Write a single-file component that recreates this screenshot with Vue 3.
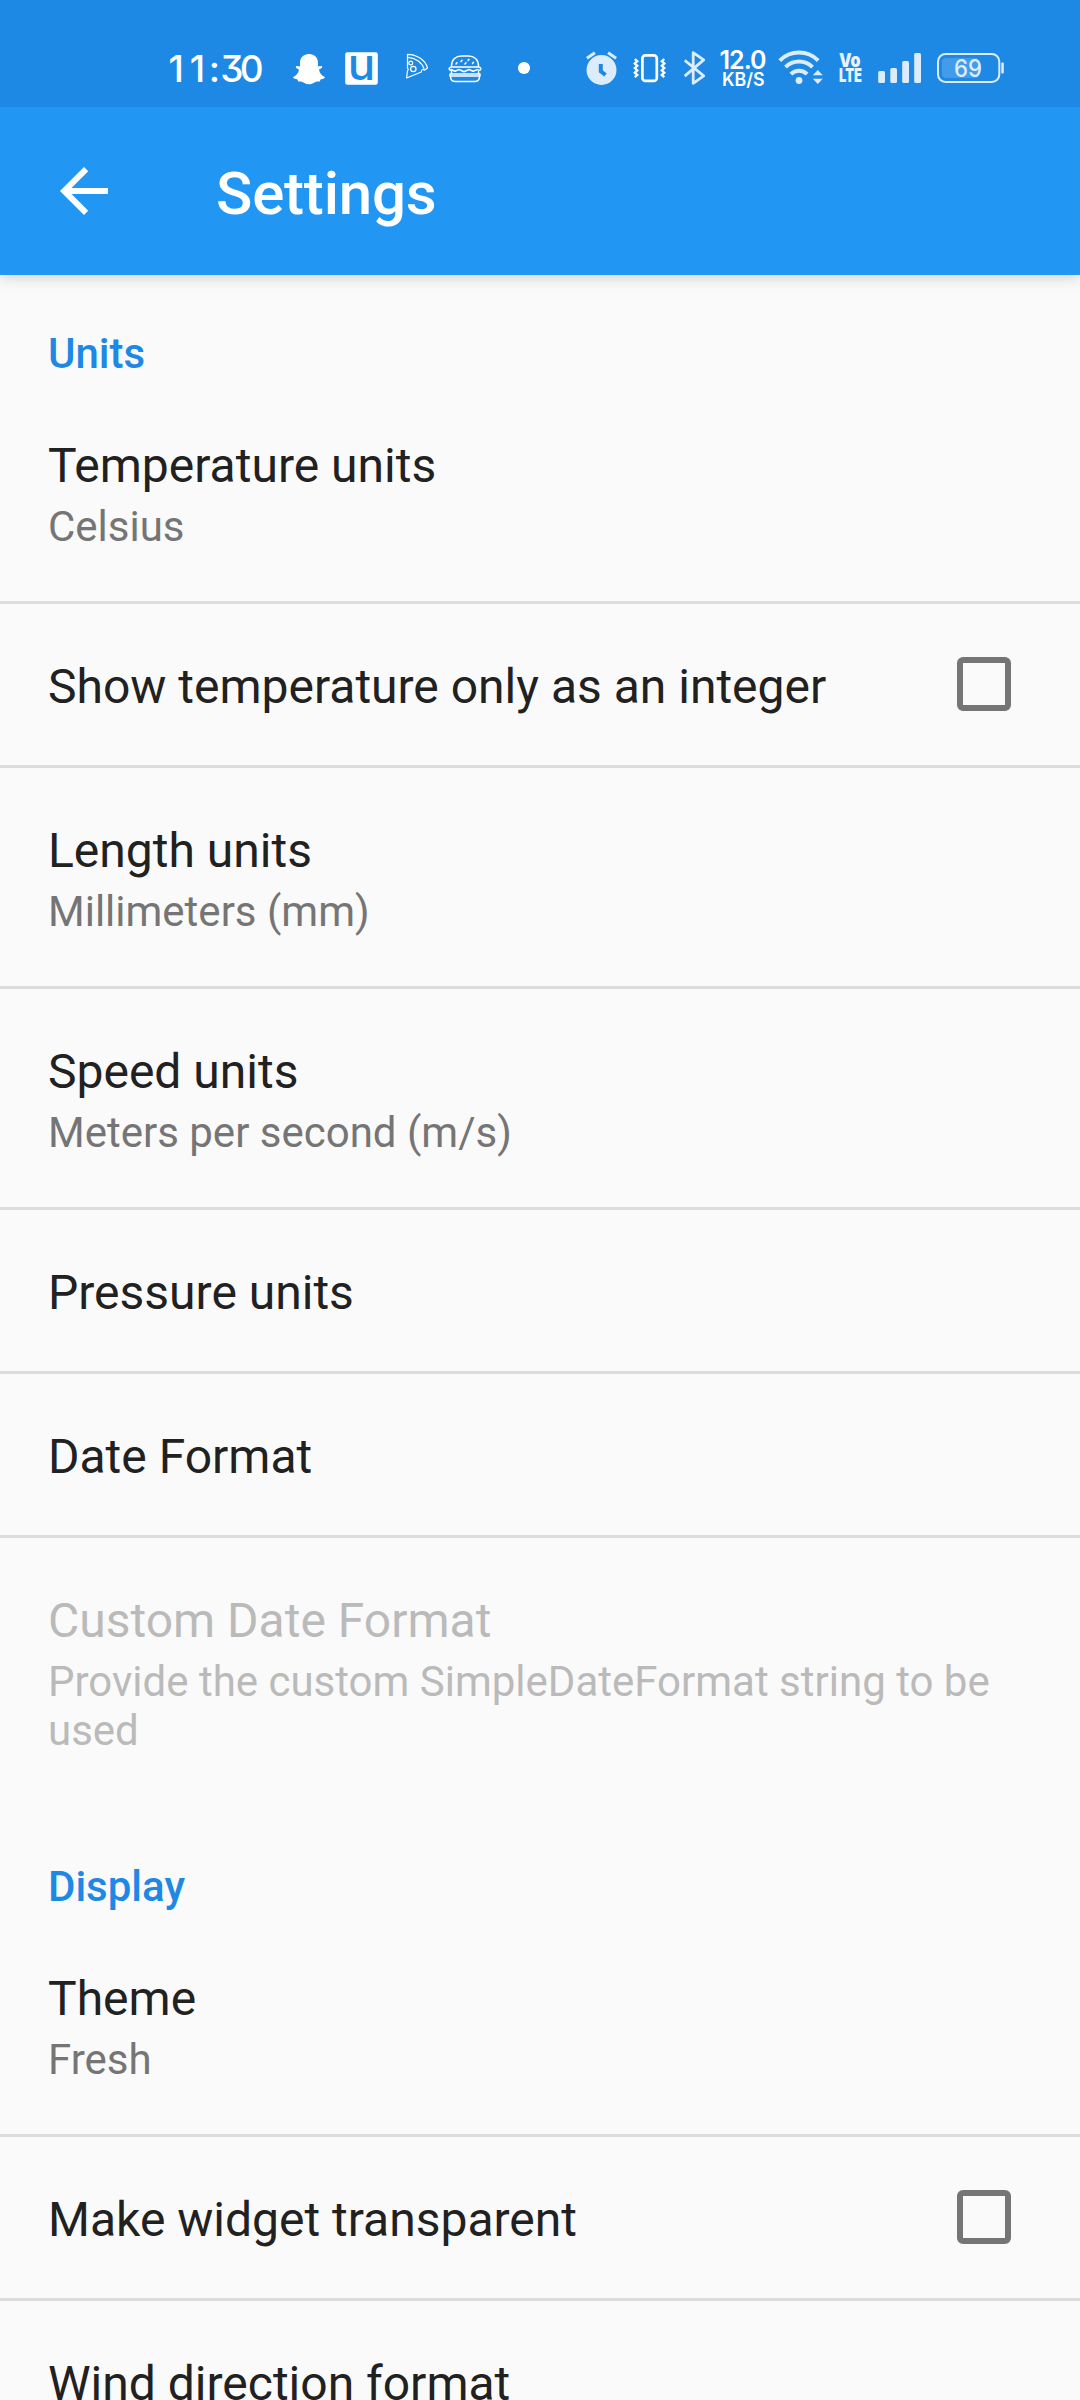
<script setup>
const sections = [
  {
    title: 'Units',
    rows: [
      { title: 'Temperature units', summary: 'Celsius' },
      { title: 'Show temperature only as an integer', checkbox: true },
      { title: 'Length units', summary: 'Millimeters (mm)' },
      { title: 'Speed units', summary: 'Meters per second (m/s)' },
      { title: 'Pressure units' },
      { title: 'Date Format' },
      {
        title: 'Custom Date Format',
        summary: 'Provide the custom SimpleDateFormat string to be used',
        disabled: true,
      },
    ],
  },
  {
    title: 'Display',
    rows: [
      { title: 'Theme', summary: 'Fresh' },
      { title: 'Make widget transparent', checkbox: true },
      { title: 'Wind direction format' },
    ],
  },
]
</script>

<template>
  <div class="screen">
    <div class="status">
      <svg class="clock" width="96" height="107" viewBox="168 0 96 107">
        <text x="168.500 189.700 208.800 220.300 239.700" y="82">11:30</text>
      </svg>
      <div class="notifications">
        <svg width="32" height="107" viewBox="293 0 32 107">
          <path fill="#fff" d="M309 54c5.600 0 9 3.600 9 9v3.200c1.500.6 3-.8 4 .1.900 1.200-.8 2.200-3 3.200.5 4 3 6.300 6 7.500-.3 1.600-2.300 2-4.500 2.500l-.7 2c-2.300-.2-4 0-5.800 1.200-3.300 2-6.700 2-10 0-1.800-1.200-3.500-1.400-5.800-1.200l-.7-2c-2.200-.5-4.200-.9-4.500-2.500 3-1.200 5.500-3.500 6-7.500-2.200-1-3.900-2-3-3.200 1-.9 2.500.5 4-.1V63c0-5.400 3.400-9 9-9z" />
        </svg>
        <svg width="33" height="107" viewBox="344.500 0 33 107">
          <rect x="344.700" y="52.300" width="32.600" height="32.500" rx="2" fill="#fff" />
          <text class="glyph-u" x="347.200" y="80" textLength="27.500" lengthAdjust="spacingAndGlyphs">u</text>
        </svg>
        <svg width="24" height="107" viewBox="405 0 24 107">
          <g fill="none" stroke="#fff" stroke-width="1.200" stroke-linejoin="round">
            <path d="M407.500 54.300c9.500.2 18 6 20 13.700l-3.200 2.200c-1-1.200-2.600-1-2.800.8l-.2 1-14.700 6 .9-7.500c1-.4 1-1.800 0-2.300z" />
            <path d="M407.700 57.300c7.600.5 14.200 5 16.400 11.500" />
            <circle cx="410.700" cy="63" r="1.900" /><circle cx="413.300" cy="69" r="2.700" />
          </g>
        </svg>
        <svg width="34" height="107" viewBox="448 0 34 107">
          <g fill="none" stroke="#fff" stroke-width="1.500" stroke-linejoin="round" stroke-linecap="round">
            <path d="M451.500 67v-1c0-6.500 4.500-10 10-10h7c5.500 0 10 3.500 10 10v1zM451 67c-2.500.8-2.500 3.300 0 3.300M479 67c2.500.8 2.500 3.300 0 3.300" />
            <path d="M451 69.500l4 1.800 4-1.800 5 2.300 5-2.300 4 1.800 5-1.800M451.500 71.500v2.500M478.500 71.500v2.500" />
            <path d="M450 74h30v2h-30zM450.500 76.500c0 3.500 2 5 5 5h19c3 0 5-1.500 5-5" />
            <path d="M456 64l1-1.200M461 61.500l1-1.200M465 64l1-1.200M468 60.500l1-1.200M472.500 63.500l1-1.200" />
          </g>
        </svg>
        <svg class="dot" width="14" height="107" viewBox="517 0 14 107">
          <circle cx="524" cy="68" r="6.100" fill="#fff" />
        </svg>
      </div>
      <div class="system">
        <svg width="33" height="107" viewBox="584.500 0 33 107">
          <circle cx="601" cy="70" r="15" fill="#ddecfb" />
          <path d="M586.400 58.300l8-5.500M607.600 52.800l8 5.500" stroke="#ddecfb" stroke-width="3" fill="none" />
          <path d="M600.300 64v7.200l4.700 3.800" stroke="#1e88e5" stroke-width="4" fill="none" />
        </svg>
        <svg width="33" height="107" viewBox="633 0 33 107">
          <g fill="none" stroke="#fff" stroke-width="2.700">
            <rect x="642.400" y="55.300" width="14.400" height="25.600" rx="3" />
            <path stroke-width="2.300" d="M634.800 59l2.500 2.200-2.500 2.300 2.500 2.300-2.500 2.300 2.500 2.300-2.500 2.300 2.500 2.200-2.500 2.200M664.300 59l-2.500 2.200 2.500 2.300-2.500 2.300 2.500 2.300-2.500 2.300 2.500 2.300-2.500 2.200 2.500 2.200" />
          </g>
        </svg>
        <svg width="22" height="107" viewBox="684 0 22 107">
          <path d="M684.700 60.300l19 15.500-10.500 7.500V52.700l10.500 7.200-19 16.200" fill="none" stroke="#ddecfb" stroke-width="2.800" stroke-linejoin="round" />
        </svg>
        <svg width="50" height="107" viewBox="718 0 50 107">
          <text class="rate" x="719.500" y="68.500" textLength="47" lengthAdjust="spacing">12.0</text>
          <text class="rate-unit" x="722" y="86" textLength="42.500" lengthAdjust="spacingAndGlyphs">KB/S</text>
        </svg>
        <svg width="46" height="107" viewBox="777.500 0 46 107">
          <g fill="none" stroke="#ddecfb" stroke-width="4">
            <path d="M779.300 60.600a27 27 0 0 1 38.400 0" />
            <path d="M785 67.200a19 19 0 0 1 27 0" />
            <path d="M790.400 74.100a11.500 11.500 0 0 1 16.200 0" />
          </g>
          <circle cx="798.500" cy="80.500" r="3.400" fill="#ddecfb" />
          <path d="M812.300 75.200l5-5.200 5 5.200zM812.300 78.700h10l-5 5.300z" fill="#ddecfb" />
        </svg>
        <svg width="25" height="107" viewBox="838 0 25 107">
          <text class="volte" x="839" y="66.700" textLength="21.500" lengthAdjust="spacingAndGlyphs">Vo</text>
          <text class="volte" x="839" y="82.300" textLength="23" lengthAdjust="spacingAndGlyphs">LTE</text>
        </svg>
        <svg width="44" height="107" viewBox="878 0 44 107">
          <g fill="#ddecfb">
            <rect x="878.200" y="71" width="6.800" height="12" rx="1.500" /><rect x="890.300" y="68" width="6.700" height="15" rx="1.500" />
            <rect x="902.200" y="61" width="6.800" height="22" rx="1.500" /><rect x="914.200" y="53" width="6.800" height="30" rx="1.500" />
          </g>
        </svg>
        <svg width="68" height="107" viewBox="937 0 68 107">
          <rect x="938" y="54" width="61.300" height="28" rx="7.500" fill="none" stroke="#ddecfb" stroke-width="2" />
          <rect x="942" y="58" width="37" height="20" rx="4" fill="#fff" fill-opacity=".17" />
          <rect x="1001.300" y="62.500" width="2.500" height="11" rx="1" fill="#ddecfb" />
          <text class="charge" x="954" y="77" textLength="28" lengthAdjust="spacingAndGlyphs">69</text>
        </svg>
      </div>
    </div>
    <header class="appbar">
      <svg class="back" width="72" height="72" viewBox="0 0 24 24">
        <path fill="#fff" d="M20 11H7.830l5.590-5.590L12 4l-8 8 8 8 1.410-1.410L7.830 13H20v-2z" />
      </svg>
      <h1>Settings</h1>
    </header>
    <main>
      <section v-for="section in sections" :key="section.title">
        <h2>{{ section.title }}</h2>
        <div v-for="row in section.rows" :key="row.title" class="row" :class="{ disabled: row.disabled }">
          <div class="label">
            <div class="title">{{ row.title }}</div>
            <div v-if="row.summary" class="summary">{{ row.summary }}</div>
          </div>
          <span v-if="row.checkbox" class="checkbox"></span>
        </div>
      </section>
    </main>
  </div>
</template>

<style>
body {
  margin: 0;
  overflow: hidden;
}
</style>

<style scoped>
.screen {
  width: 1080px;
  height: 2400px;
  overflow: hidden;
  background: #fafafa;
  font-family: Roboto, sans-serif;
  color: #212121;
}
.status {
  position: relative;
  z-index: 1;
  display: flex;
  height: 107px;
  padding-left: 168px;
  background: #1e88e5;
}
.status svg {
  display: block;
  flex: none;
}
.status text {
  fill: #fff;
  font-family: Inter, sans-serif;
  font-feature-settings: 'cv09';
}
.clock text {
  font-size: 37px;
  font-weight: 500;
}
.notifications {
  display: flex;
  margin-left: 29px;
}
.notifications svg:nth-child(2) { margin-left: 19.500px; }
.notifications svg:nth-child(3) { margin-left: 27.500px; }
.notifications svg:nth-child(4) { margin-left: 19px; }
.notifications .dot { margin-left: 35px; }
.status .glyph-u {
  fill: #1e88e5;
  font-size: 43px;
  font-weight: 500;
}
.system {
  display: flex;
  margin-left: 53.500px;
}
.system svg:nth-child(2) { margin-left: 15.500px; }
.system svg:nth-child(3) { margin-left: 18px; }
.system svg:nth-child(4) { margin-left: 12px; }
.system svg:nth-child(5) { margin-left: 9.500px; }
.system svg:nth-child(6) { margin-left: 14.500px; }
.system svg:nth-child(7) { margin-left: 15px; }
.system svg:nth-child(8) { margin-left: 15px; }
.status .rate {
  font-size: 25px;
  font-weight: 600;
}
.status .rate-unit {
  font-size: 18px;
  font-weight: 600;
}
.status .volte {
  fill: #e8f3fd;
  font-size: 19px;
  font-weight: 900;
}
.status .charge {
  fill: #ddecfb;
  font-size: 24px;
  font-weight: 500;
}
.appbar {
  position: relative;
  display: flex;
  align-items: center;
  box-sizing: border-box;
  height: 168px;
  padding-left: 48px;
  background: #2196f3;
  box-shadow: 0 4px 12px rgba(0, 0, 0, 0.14);
}
h1 {
  margin: 5px 0 0 96px;
  color: #fff;
  font-size: 60px;
  line-height: 70px;
  font-weight: 500;
  letter-spacing: -0.2px;
}
h2 {
  box-sizing: border-box;
  height: 108px;
  margin: 0;
  padding: 54px 48px 0;
  color: #1e88e5;
  font-size: 42px;
  line-height: 49px;
  font-weight: 500;
}
.row {
  display: flex;
  align-items: flex-start;
  justify-content: space-between;
  padding: 55px 69px 50px 48px;
  border-bottom: 3px solid #dcdcdc;
}
.title {
  font-size: 48px;
  line-height: 56px;
}
.summary {
  margin-top: 8px;
  font-size: 42px;
  line-height: 49px;
  color: #757575;
}
.disabled {
  border-color: transparent;
}
.disabled .title,
.disabled .summary {
  color: #bababa;
}
.checkbox {
  box-sizing: border-box;
  width: 54px;
  height: 54px;
  margin-top: -2px;
  border: 6px solid #757575;
  border-radius: 6px;
}
</style>
